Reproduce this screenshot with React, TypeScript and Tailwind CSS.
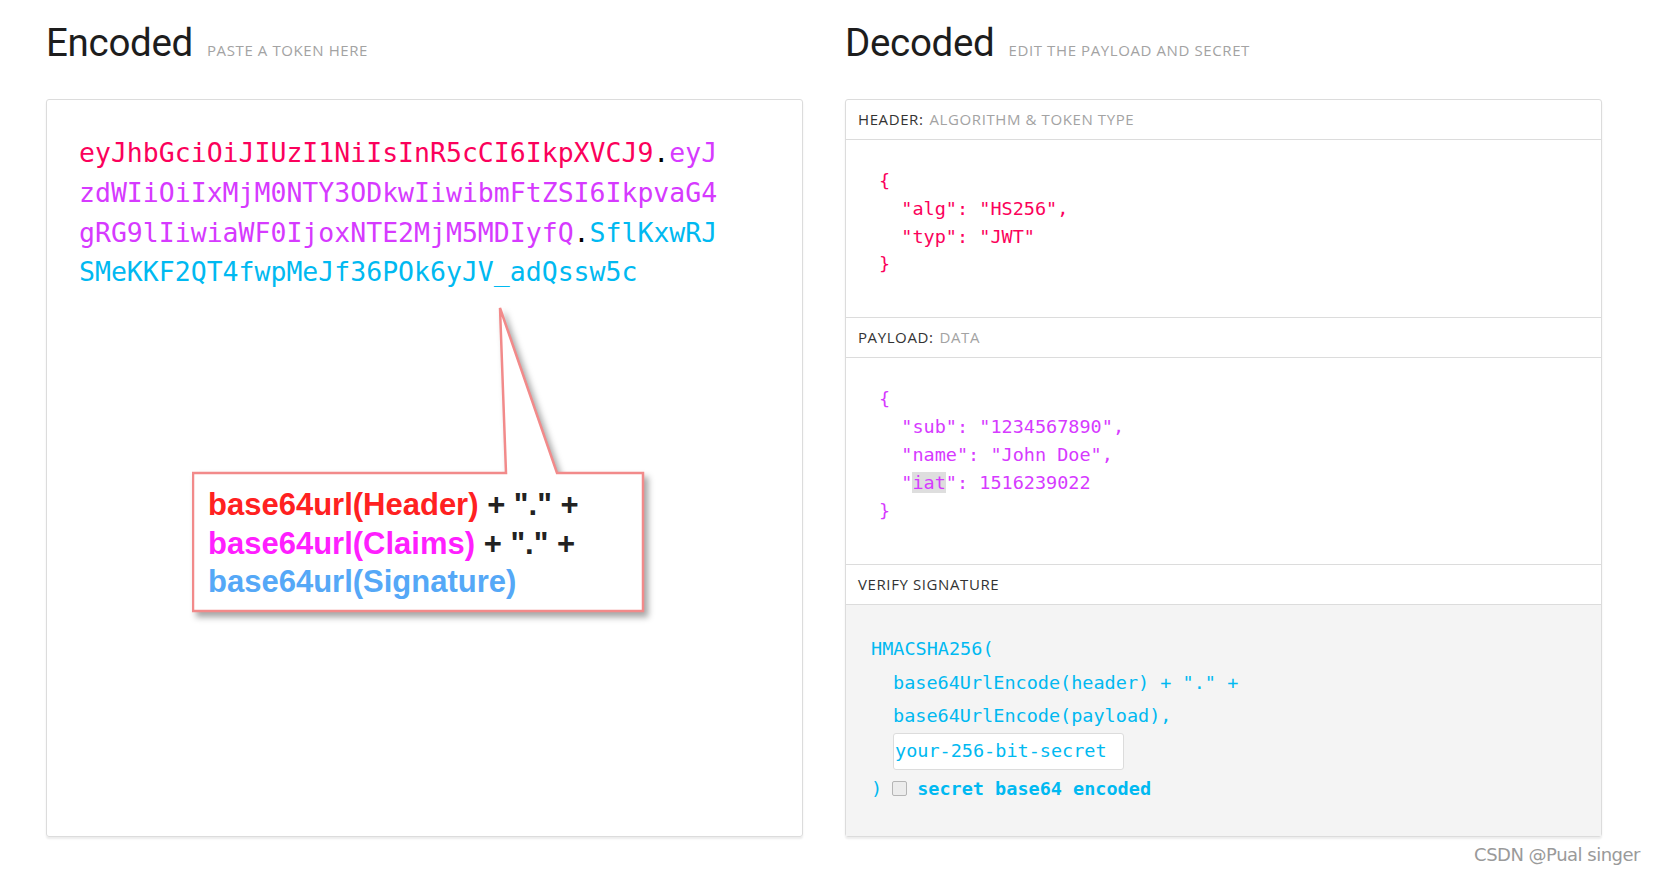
const mono = "font-['DejaVu_Sans_Mono','Liberation_Mono',monospace]";

const SectionLabel = ({ title, sub }: { title: string; sub?: string }) => (
    <div className="h-[40px] flex items-center px-[12px] text-[15px] tracking-[0.6px] uppercase font-['Open_Sans',sans-serif] border-b border-[#dcdcdc]">
        <span className="text-[#333]">{title}</span>
        {sub && <span className="ml-[6px] text-[#a3a3a3]">{sub}</span>}
    </div>
);

const Callout = () => (
    <div className="absolute left-[145px] top-[207px] w-[460px] h-[312px]">
        <svg
            width="460"
            height="312"
            viewBox="0 0 460 312"
            className="absolute left-0 top-0 drop-shadow-[4px_5px_3px_rgba(0,0,0,0.35)]"
        >
            <path
                d="M1 166 L314 166 L308 1 L365 166 L451 166 L451 304 L1 304 Z"
                fill="#fff"
                stroke="#f28a8a"
                strokeWidth="2.5"
                strokeLinejoin="miter"
            />
        </svg>
        <div className="absolute left-[16px] top-[179px] font-['Liberation_Sans',Arial,sans-serif] font-bold text-[31px] leading-[38.5px] text-[#222]">
            <div>
                <span className="text-[#ff2121]">base64url(Header)</span> + "." +
            </div>
            <div>
                <span className="text-[#ff1fff]">base64url(Claims)</span> + "." +
            </div>
            <div className="text-[#55a8f7]">base64url(Signature)</div>
        </div>
    </div>
);

const App = () => {
    return (
        <div className="relative w-[1656px] h-[873px] bg-white overflow-hidden">
            <div className="flex gap-[42px] pl-[46px] pt-[24px]">
                {/* encoded */}
                <div className="w-[757px] flex flex-col">
                    <div className="flex items-baseline h-[40px] font-['Roboto',sans-serif]">
                        <h1 className="text-[38.5px] leading-none text-[#1d1d1d] tracking-[-0.3px]">Encoded</h1>
                        <span className="ml-[14px] text-[15px] tracking-[0.6px] uppercase text-[#a3a3a3] font-['Open_Sans',sans-serif]">Paste a token here</span>
                    </div>
                    <div className="relative mt-[35px] h-[738px] border border-[#dcdcdc] rounded-[3px] shadow-[0_2px_2px_rgba(0,0,0,0.08)]">
                        <div className={`pt-[33px] pl-[32px] w-[680px] text-[26.5px] leading-[39.8px] break-all ${mono}`}>
                            <span className="text-[#fb015b]">eyJhbGciOiJIUzI1NiIsInR5cCI6IkpXVCJ9</span>
                            <span className="text-black">.</span>
                            <span className="text-[#d63aff]">eyJzdWIiOiIxMjM0NTY3ODkwIiwibmFtZSI6IkpvaG4gRG9lIiwiaWF0IjoxNTE2MjM5MDIyfQ</span>
                            <span className="text-black">.</span>
                            <span className="text-[#00b9f1]">SflKxwRJSMeKKF2QT4fwpMeJf36POk6yJV_adQssw5c</span>
                        </div>
                        <Callout />
                    </div>
                </div>

                {/* decoded */}
                <div className="w-[757px] flex flex-col">
                    <div className="flex items-baseline h-[40px] font-['Roboto',sans-serif]">
                        <h1 className="text-[38.5px] leading-none text-[#1d1d1d] tracking-[-0.3px]">Decoded</h1>
                        <span className="ml-[14px] text-[15px] tracking-[0.6px] uppercase text-[#a3a3a3] font-['Open_Sans',sans-serif]">Edit the payload and secret</span>
                    </div>
                    <div className="mt-[35px] h-[738px] border border-[#dcdcdc] rounded-[3px] shadow-[0_2px_2px_rgba(0,0,0,0.08)] flex flex-col">
                        <SectionLabel title="Header:" sub="Algorithm & token type" />
                        <div className={`h-[178px] border-b border-[#dcdcdc] pt-[27px] pl-[33px] text-[18.5px] leading-[27.8px] text-[#fb015b] whitespace-pre ${mono}`}>
                            <div>{'{'}</div>
                            <div>{'  "alg": "HS256",'}</div>
                            <div>{'  "typ": "JWT"'}</div>
                            <div>{'}'}</div>
                        </div>
                        <SectionLabel title="Payload:" sub="Data" />
                        <div className={`h-[207px] border-b border-[#dcdcdc] pt-[27px] pl-[33px] text-[18.5px] leading-[28px] text-[#d63aff] whitespace-pre ${mono}`}>
                            <div>{'{'}</div>
                            <div>{'  "sub": "1234567890",'}</div>
                            <div>{'  "name": "John Doe",'}</div>
                            <div>
                                {'  "'}
                                <span className="bg-[#dedede]">iat</span>
                                {'": 1516239022'}
                            </div>
                            <div>{'}'}</div>
                        </div>
                        <SectionLabel title="Verify signature" />
                        <div className={`flex-1 bg-[#f4f4f4] pt-[27px] pl-[25px] text-[18.5px] text-[#00b9f1] whitespace-pre ${mono}`}>
                            <div className="leading-[33.5px]">HMACSHA256(</div>
                            <div className="pl-[22px] leading-[33.5px]">base64UrlEncode(header) + "." +</div>
                            <div className="pl-[22px] leading-[33.5px]">base64UrlEncode(payload),</div>
                            <div className="pl-[22px]">
                                <div className="w-[231px] h-[37px] bg-white border border-[#dcdcdc] rounded-[3px] flex items-center px-[1px]">
                                    your-256-bit-secret
                                </div>
                            </div>
                            <div className="flex items-center h-[38px]">
                                <span>)</span>
                                <span className="ml-[10px] w-[15px] h-[15px] rounded-[2px] border border-[#b5b5b5] bg-[#ececec]" />
                                <span className="ml-[10px] font-bold">secret base64 encoded</span>
                            </div>
                        </div>
                    </div>
                </div>
            </div>

            <div className="absolute right-[16px] bottom-[5px] text-[18px] text-[#9a9a9a] font-['DejaVu_Sans','Noto_Sans',sans-serif] tracking-[-0.5px]">
                CSDN @Pual singer
            </div>
        </div>
    );
};

export default App;
